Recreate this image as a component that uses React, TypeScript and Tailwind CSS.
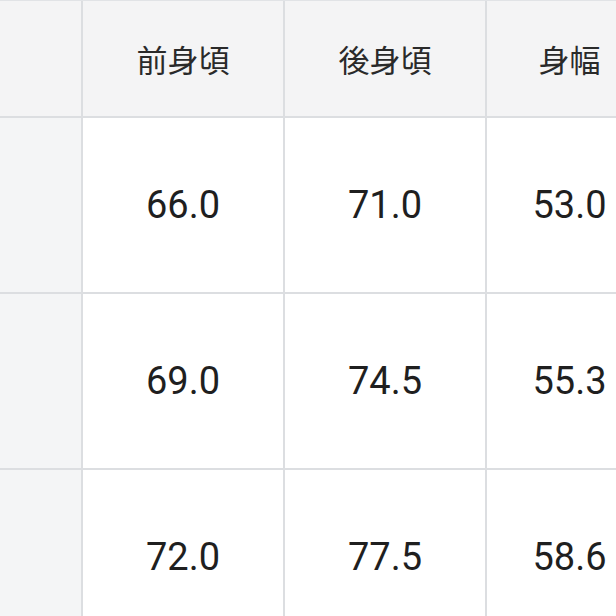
const headers = ["", "前身頃", "後身頃", "身幅"];

const rows = [
  ["66.0", "71.0", "53.0"],
  ["69.0", "74.5", "55.3"],
  ["72.0", "77.5", "58.6"],
];

export default function App() {
  return (
    <div className="w-[616px] h-[616px] overflow-hidden bg-white">
      <div className="w-[720px] grid grid-cols-[83px_202px_202px_233px] border-t border-[#e1e3e6]">
        {headers.map((h, i) => (
          <div
            key={i}
            className="h-[117px] flex items-center justify-center bg-[#f4f4f5] border-r-2 border-b-2 border-[#dcdee1] text-[31px] text-[#2a2a2a] pt-[2px]"
            style={{ fontFamily: '"Noto Sans CJK JP", "Noto Sans", sans-serif' }}
          >
            {h && <span className={i === 3 ? "-translate-x-[33px]" : ""}>{h}</span>}
          </div>
        ))}
        {rows.map((r, ri) => (
          <div key={ri} className="contents">
            <div className="h-[176px] bg-[#f4f5f6] border-r-2 border-b-2 border-[#dcdee1]" />
            {r.map((v, ci) => (
              <div
                key={ci}
                className="h-[176px] flex items-center justify-center bg-white border-r-2 border-b-2 border-[#dcdee1] text-[38px] text-[#1f1f1f]"
                style={{ fontFamily: "Roboto, 'Liberation Sans', sans-serif" }}
              >
                <span className={ci === 2 ? "-translate-x-[33px]" : ""}>{v}</span>
              </div>
            ))}
          </div>
        ))}
      </div>
    </div>
  );
}
